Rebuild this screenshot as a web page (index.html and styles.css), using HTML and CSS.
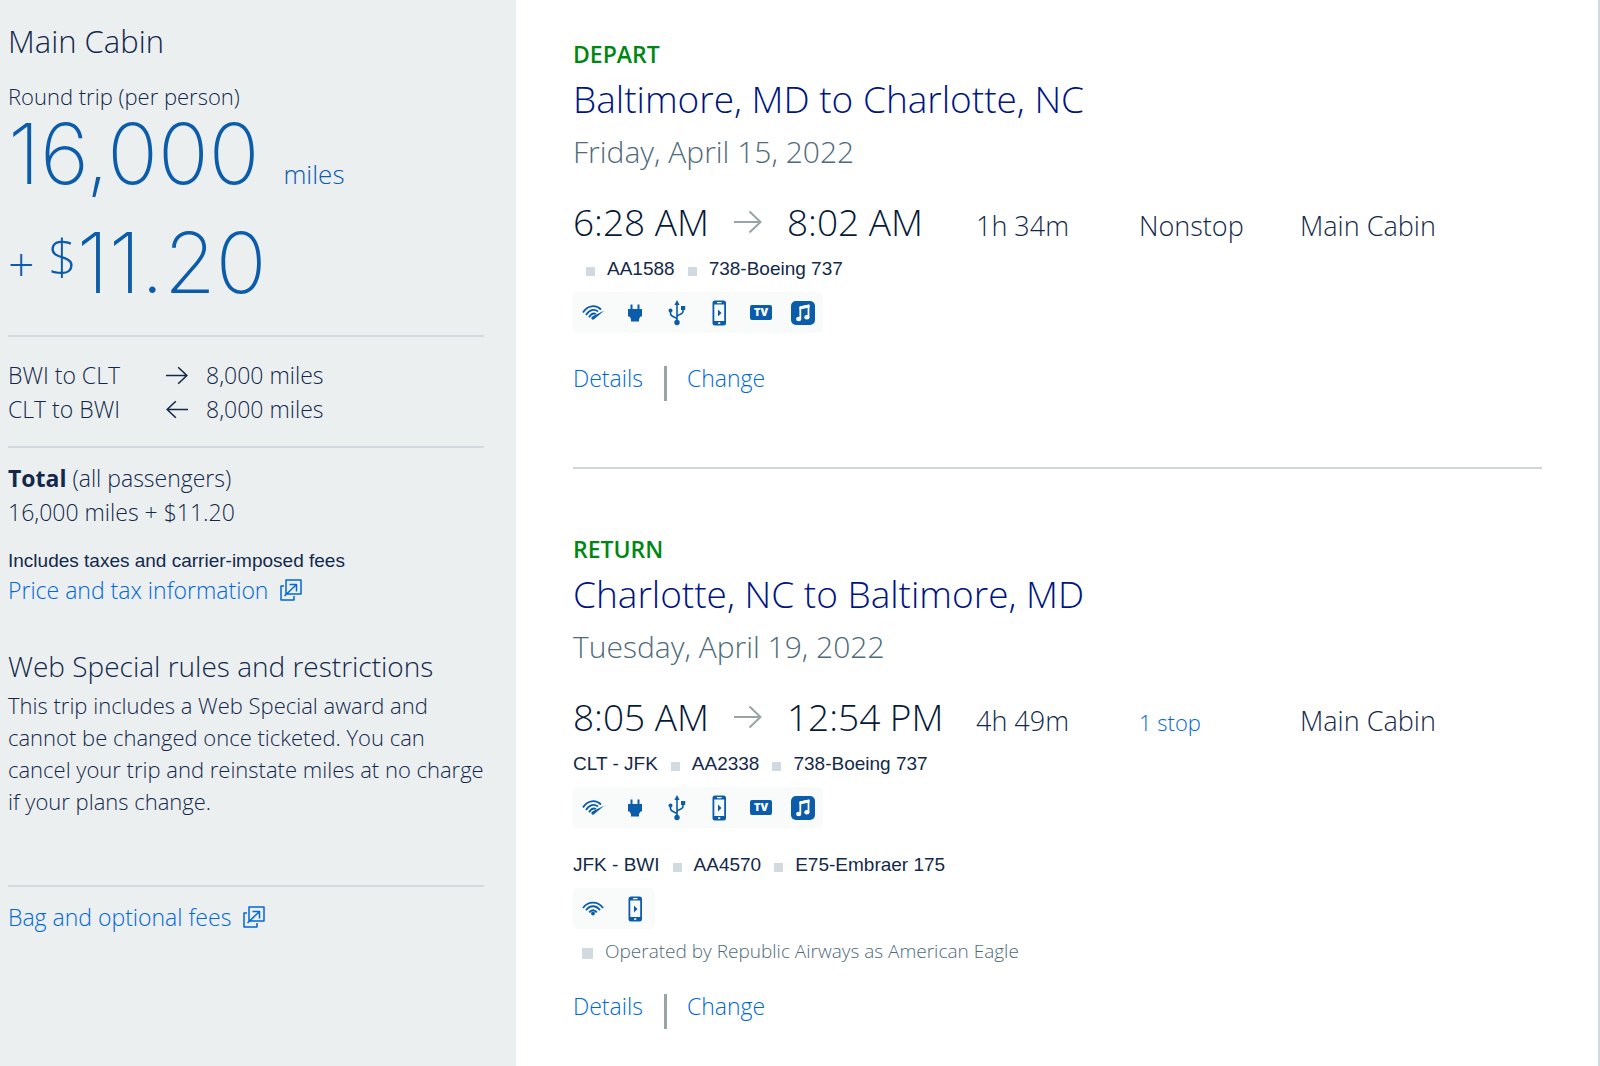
FILE: index.html
```html
<!DOCTYPE html>
<html lang="en">
<head>
  <meta charset="UTF-8">
  <meta name="viewport" content="width=device-width, initial-scale=1.0">
  <title>Your trip summary</title>
  <link rel="stylesheet" href="styles.css">
</head>
<body>
  <!-- Icons shared by both flights -->
  <svg class="sprite" aria-hidden="true">
    <symbol id="arrow" viewBox="0 0 28 24">
      <path d="M0 12h26M15.500 1.500L26.500 12l-11 10.500" fill="none" stroke="currentColor" stroke-width="2"/>
    </symbol>
    <symbol id="new-window" viewBox="0 0 22 22">
      <path d="M6 1h15v14H6zM4 7H1v14h13v-4M4.500 17L16 6M9.500 5.500h7v7" fill="none" stroke="currentColor" stroke-width="1.500" stroke-linejoin="round"/>
    </symbol>
    <symbol id="fast-wifi" viewBox="0 0 26 26">
      <path d="M3 12.500C7.500 5 16 4.500 21 9.500M6 15C9.500 9.500 14 8.500 18 11.500M9 17.300c2-3.300 4.500-4.500 7-3.300" fill="none" stroke="currentColor" stroke-width="1.800"/>
      <path d="M24.500 10.500L14 19.300c-1.500 1.200-3.600-.5-2.300-2.200l1.500-1z" fill="currentColor"/>
    </symbol>
    <symbol id="wifi" viewBox="0 0 26 26">
      <path d="M3 12c5-7.300 15-7.300 20 0M6 14.200c3.800-5.300 10.200-5.300 14 0M9.200 16.400c2.200-2.900 5.400-2.900 7.600 0" fill="none" stroke="currentColor" stroke-width="1.800"/>
      <circle cx="13" cy="17.500" r="1.900" fill="currentColor"/>
    </symbol>
    <symbol id="power" viewBox="0 0 26 26">
      <path d="M8.500 4.500h2V9h5V4.500h2V9h2.500v7.500h-1.500L17 19v2.500H9V19l-1.500-2.500H6V9h2.500z" fill="currentColor"/>
    </symbol>
    <symbol id="usb" viewBox="0 0 26 26">
      <path d="M13 22V4M13 19.500c0-3-6.500-2-6.500-6V11M13 17c0-3 6-2 6-5.500V8" fill="none" stroke="currentColor" stroke-width="1.600"/>
      <path d="M13 0l2.600 5h-5.200zM17 6h4.200v4H17z" fill="currentColor"/>
      <circle cx="6.500" cy="10.500" r="2" fill="currentColor"/>
      <circle cx="13" cy="22.500" r="2.700" fill="currentColor"/>
    </symbol>
    <symbol id="phone" viewBox="0 0 26 26">
      <path fill-rule="evenodd" d="M9 .5h8.500a2.500 2.500 0 0 1 2.500 2.500v20a2.500 2.500 0 0 1-2.500 2.500H9A2.500 2.500 0 0 1 6.500 23V3A2.500 2.500 0 0 1 9 .5zM8.300 4.500v16.500h9.900V4.500zM11 2v1.200h4.500V2zM12.200 22.300v1.600h2v-1.600z" fill="currentColor"/>
      <path d="M12 9.500l3.500 3.500-3.500 3.500z" fill="currentColor"/>
    </symbol>
    <symbol id="tv" viewBox="0 0 26 26">
      <rect x="2" y="5" width="22" height="15" rx="2" fill="currentColor"/>
      <text x="13" y="16" class="tv-label">TV</text>
    </symbol>
    <symbol id="music" viewBox="0 0 26 26">
      <rect x="1" y="1" width="24" height="24" rx="5" fill="currentColor"/>
      <path d="M18.500 5v12M10.300 18.500V7M10 7.500l9-2" fill="none" stroke="#fff" stroke-width="1.800"/>
      <path d="M9.500 6.500l10-2v3l-10 2z" fill="#fff"/>
      <ellipse cx="8.700" cy="19" rx="2.600" ry="2.200" fill="#fff"/>
      <ellipse cx="16.900" cy="17.200" rx="2.600" ry="2.200" fill="#fff"/>
    </symbol>
  </svg>

  <div class="page">
    <aside class="summary">
      <h2 class="cabin">Main Cabin</h2>
      <p class="trip-type">Round trip (per person)</p>
      <p class="price">16,000 <span class="unit">miles</span></p>
      <p class="price fees"><span class="plus">+</span><span class="dollar">$</span>11.20</p>

      <hr>
      <div class="legs">
        <span>BWI to CLT</span>
        <svg class="leg-arrow"><use href="#arrow"/></svg>
        <span>8,000 miles</span>
        <span>CLT to BWI</span>
        <svg class="leg-arrow back"><use href="#arrow"/></svg>
        <span>8,000 miles</span>
      </div>

      <hr>
      <div class="total">
        <p><strong>Total</strong> (all passengers)</p>
        <p>16,000 miles + $11.20</p>
      </div>
      <p class="taxes">Includes taxes and carrier-imposed fees</p>
      <a class="info-link" href="#">Price and tax information <svg><use href="#new-window"/></svg></a>

      <h3 class="rules-title">Web Special rules and restrictions</h3>
      <p class="rules">This trip includes a Web Special award and cannot be changed once ticketed. You can cancel your trip and reinstate miles at no charge if your plans change.</p>

      <hr>
      <a class="info-link" href="#">Bag and optional fees <svg><use href="#new-window"/></svg></a>
    </aside>

    <main class="flights">
      <section class="flight">
        <p class="direction">DEPART</p>
        <h2 class="route">Baltimore, MD to Charlotte, NC</h2>
        <p class="date">Friday, April 15, 2022</p>
        <div class="times">
          <div class="clock">
            <span>6:28 AM</span>
            <svg><use href="#arrow"/></svg>
            <span>8:02 AM</span>
          </div>
          <span>1h 34m</span>
          <span>Nonstop</span>
          <span>Main Cabin</span>
        </div>
        <ul class="segment direct">
          <li>AA1588</li>
          <li>738-Boeing 737</li>
        </ul>
        <div class="amenities">
          <svg><use href="#fast-wifi"/></svg>
          <svg><use href="#power"/></svg>
          <svg><use href="#usb"/></svg>
          <svg><use href="#phone"/></svg>
          <svg><use href="#tv"/></svg>
          <svg><use href="#music"/></svg>
        </div>
        <div class="actions">
          <a href="#">Details</a>
          <a href="#">Change</a>
        </div>
      </section>

      <section class="flight">
        <p class="direction">RETURN</p>
        <h2 class="route">Charlotte, NC to Baltimore, MD</h2>
        <p class="date">Tuesday, April 19, 2022</p>
        <div class="times">
          <div class="clock">
            <span>8:05 AM</span>
            <svg><use href="#arrow"/></svg>
            <span>12:54 PM</span>
          </div>
          <span>4h 49m</span>
          <a class="stops" href="#">1 stop</a>
          <span>Main Cabin</span>
        </div>
        <ul class="segment">
          <li>CLT - JFK</li>
          <li>AA2338</li>
          <li>738-Boeing 737</li>
        </ul>
        <div class="amenities">
          <svg><use href="#fast-wifi"/></svg>
          <svg><use href="#power"/></svg>
          <svg><use href="#usb"/></svg>
          <svg><use href="#phone"/></svg>
          <svg><use href="#tv"/></svg>
          <svg><use href="#music"/></svg>
        </div>
        <ul class="segment next">
          <li>JFK - BWI</li>
          <li>AA4570</li>
          <li>E75-Embraer 175</li>
        </ul>
        <div class="amenities">
          <svg><use href="#wifi"/></svg>
          <svg><use href="#phone"/></svg>
        </div>
        <p class="operator">Operated by Republic Airways as American Eagle</p>
        <div class="actions">
          <a href="#">Details</a>
          <a href="#">Change</a>
        </div>
      </section>
    </main>
  </div>
</body>
</html>
```
FILE: styles.css
```css
* {
  box-sizing: border-box;
}

body {
  margin: 0;
  font-family: "Open Sans", "Noto Sans", sans-serif;
  font-weight: 350;
  font-size: 23px;
  line-height: 32px;
  color: #13294b;
  background-color: #fff;
}

h2,
h3,
p,
ul {
  margin: 0;
  padding: 0;
  font-weight: inherit;
}

a {
  color: #0068d9;
  text-decoration: none;
}

.sprite {
  display: none;
}

.page {
  display: flex;
  min-height: 100vh;
  border-right: 2px solid #d0dae0;
}

/* Price summary */
.summary {
  flex: 0 0 516px;
  padding: 21px 32px 0 8px;
  background-color: #ebeff0;
}

.summary hr {
  height: 2px;
  margin: 0;
  border: 0;
  background-color: #d0dae0;
}

.cabin {
  font-size: 31px;
  line-height: 40px;
}

.trip-type {
  margin-top: 19px;
  font-size: 22px;
}

.price {
  display: flex;
  align-items: baseline;
  font-family: Inter, "Open Sans", sans-serif;
  font-size: 84px;
  font-weight: 200;
  line-height: 84px;
  color: #0b5cab;
}

.unit {
  margin-left: 24px;
  font-family: "Open Sans", sans-serif;
  font-size: 26px;
  font-weight: 350;
  line-height: 32px;
}

.fees {
  margin: 25px 0 30px;
}

.plus {
  align-self: center;
  margin-right: 14px;
  font-family: "Open Sans", sans-serif;
  font-size: 46px;
  font-weight: 300;
}

.dollar {
  align-self: flex-start;
  font-family: "Open Sans", sans-serif;
  font-size: 50px;
  font-weight: 300;
  line-height: 70px;
}

.legs {
  display: grid;
  grid-template-columns: 158px 40px 1fr;
  align-items: center;
  margin: 21px 0 20px;
  line-height: 34px;
}

.leg-arrow {
  width: 22px;
  height: 19px;
}

.back {
  transform: rotate(180deg);
}

.total {
  margin: 13px 0 19px;
  line-height: 34px;
}

.total strong {
  font-weight: 700;
}

.taxes {
  font-family: "Liberation Sans", Arial, sans-serif;
  font-size: 19px;
  line-height: 26px;
  font-weight: 400;
}

.info-link {
  display: flex;
  align-items: center;
  gap: 12px;
}

.info-link svg {
  width: 22px;
  height: 22px;
}

.rules-title {
  margin: 40px 0 3px;
  font-size: 28px;
  line-height: 40px;
}

.rules {
  margin-bottom: 68px;
  font-size: 22px;
}

.rules + hr {
  margin-bottom: 14px;
}

/* Flights */
.flights {
  flex: 1;
  padding: 38px 56px 36px 57px;
}

.flight + .flight {
  margin-top: 66px;
  padding-top: 64px;
  border-top: 2px solid #d0d5d8;
}

.direction {
  font-weight: 600;
  color: #008712;
}

.route {
  margin-top: 2px;
  font-size: 37px;
  font-weight: 300;
  line-height: 54px;
  color: #00157f;
}

.date {
  margin-top: 4px;
  font-size: 30px;
  font-weight: 300;
  line-height: 44px;
  color: #4f6b7a;
}

.times {
  display: grid;
  grid-template-columns: 403px 163px 161px 1fr;
  align-items: baseline;
  margin-top: 20px;
  font-size: 27px;
  font-weight: 300;
  line-height: 36px;
}

.clock {
  display: flex;
  align-items: center;
  gap: 25px;
  font-size: 37px;
  line-height: 56px;
  color: #061938;
}

.clock svg {
  width: 28px;
  height: 24px;
  color: #98a4a8;
}

.stops {
  font-size: 22px;
  font-weight: 350;
}

.segment {
  display: flex;
  margin-top: 6px;
  list-style: none;
  font-family: "Liberation Sans", Arial, sans-serif;
  font-size: 19px;
  line-height: 26px;
  font-weight: 400;
}

.segment li {
  display: flex;
  align-items: center;
}

.segment li + li::before,
.segment.direct li::before,
.operator::before {
  content: "";
  width: 9px;
  height: 9px;
  margin: 4px 12px 0 13px;
  background-color: #d0dae0;
}

.segment.next {
  margin-top: 24px;
}

.amenities {
  display: inline-flex;
  gap: 16px;
  margin-top: 10px;
  padding: 8px 7px 7px;
  border-radius: 5px;
  background-color: #f9fbfb;
  color: #0b5cab;
  vertical-align: top;
}

.amenities svg {
  width: 26px;
  height: 26px;
}

.tv-label {
  font-family: "Open Sans", sans-serif;
  font-size: 11px;
  font-weight: 800;
  text-anchor: middle;
  fill: #fff;
}

.operator {
  display: flex;
  align-items: center;
  margin-top: 9px;
  font-size: 19px;
  line-height: 26px;
  color: #4f6b7a;
}

.operator::before {
  width: 11px;
  height: 11px;
  margin-left: 9px;
}

.actions {
  display: flex;
  margin-top: 27px;
  line-height: 36px;
}

.operator + .actions {
  margin-top: 24px;
}

.actions a + a::before {
  content: "";
  display: inline-block;
  width: 3px;
  height: 35px;
  margin: 6px 20px 0 21px;
  background-color: #98a4a8;
  vertical-align: top;
}
```
